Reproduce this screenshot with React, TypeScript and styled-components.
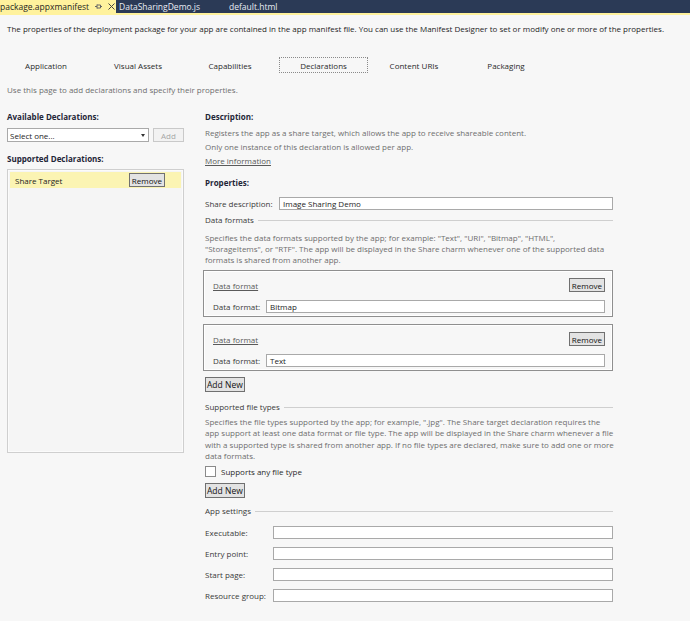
import React from "react";
import styled, { createGlobalStyle } from "styled-components";

const Global = createGlobalStyle`
  html, body { margin: 0; padding: 0; background: #f7f7f7; }
  body { font-family: "Open Sans", "Noto Sans", sans-serif; font-size: 8px; color: #1e1e1e; }
  * { box-sizing: border-box; }
`;

const Page = styled.div`
  width: 690px;
  height: 621px;
  overflow: hidden;
  background: #f7f7f7;
`;

const DocStrip = styled.div`
  display: flex;
  align-items: stretch;
  height: 15px;
  background: #2b3a56;
  border-bottom: 2px solid #fff29d;
`;

const DocTab = styled.div<{ $active?: boolean; $w: number }>`
  display: flex;
  align-items: center;
  gap: 6px;
  width: ${(p) => p.$w}px;
  padding-left: ${(p) => (p.$active ? 0 : 3)}px;
  background: ${(p) => (p.$active ? "#fff29d" : "transparent")};
  color: ${(p) => (p.$active ? "#1e1e1e" : "#e8ecf4")};
  font-size: 8.5px;
  line-height: 13px;
`;

const TabIcon = styled.span`
  display: inline-flex;
  align-items: center;
  color: #555;
`;

const Header = styled.div`
  margin: 8px 0 0 7px;
  line-height: 12px;
  white-space: nowrap;
`;

const TabRow = styled.div`
  display: grid;
  grid-template-columns: repeat(6, 92px);
  margin-top: 22px;
  height: 16px;
`;

const PageTab = styled.div<{ $active?: boolean }>`
  display: flex;
  align-items: center;
  justify-content: center;
  margin: 0 ${(p) => (p.$active ? "0 0 3px" : "0")};
  border: 1px dotted ${(p) => (p.$active ? "#8a8a8a" : "transparent")};
  color: #2a2a2a;
`;

const Hint = styled.div`
  margin: 11px 0 0 7px;
  line-height: 12px;
  color: #6e6e6e;
`;

const Columns = styled.div`
  display: grid;
  grid-template-columns: 177px 408px;
  column-gap: 21px;
  margin: 15px 0 0 7px;
`;

const Column = styled.div`
  display: flex;
  flex-direction: column;
`;

const Heading = styled.div<{ $mt?: number }>`
  font-weight: 700;
  line-height: 12px;
  color: #1f2638;
  margin-top: ${(p) => p.$mt ?? 0}px;
`;

const SelectRow = styled.div`
  display: flex;
  gap: 4px;
  margin-top: 5px;
  height: 14px;
`;

const Select = styled.div`
  flex: 1;
  display: flex;
  align-items: center;
  justify-content: space-between;
  padding: 0 3px 0 2px;
  background: #fff;
  border: 1px solid #a9a9a9;
  color: #1e1e1e;
`;

const Caret = styled.span`
  width: 0;
  height: 0;
  border-left: 2.5px solid transparent;
  border-right: 2.5px solid transparent;
  border-top: 3px solid #333;
`;

const Button = styled.button<{ $disabled?: boolean }>`
  font: inherit;
  font-size: 8px;
  line-height: 11px;
  padding: 0 2px;
  margin: 0;
  height: 14px;
  background: ${(p) => (p.$disabled ? "#f2f2f2" : "#e3e3e3")};
  border: 1px solid ${(p) => (p.$disabled ? "#c9c9c9" : "#707070")};
  color: ${(p) => (p.$disabled ? "#a6a6a6" : "#111")};
  border-radius: 0;
  cursor: default;
`;

const AddBtn = styled(Button)`
  width: 31px;
`;

const ListBox = styled.div`
  margin-top: 4px;
  height: 284px;
  border: 1px solid #cfcfcf;
  box-shadow: inset 0 0 0 1px #fbfbfb;
  padding: 2px 2px;
  background: #f5f5f5;
`;

const ListItem = styled.div`
  display: flex;
  align-items: center;
  justify-content: space-between;
  height: 16px;
  padding: 0 16px 0 5px;
  background: #fbf4b3;
  color: #222;
`;

const Para = styled.div<{ $lh?: number; $mt?: number; $color?: string }>`
  line-height: ${(p) => p.$lh ?? 14}px;
  margin-top: ${(p) => p.$mt ?? 0}px;
  color: ${(p) => p.$color ?? "#6e6e6e"};
  white-space: nowrap;
`;

const Link = styled.span`
  text-decoration: underline;
  color: #5a5a5a;
`;

const FieldRow = styled.div<{ $label: number; $mt?: number }>`
  display: grid;
  grid-template-columns: ${(p) => p.$label}px 1fr;
  align-items: center;
  margin-top: ${(p) => p.$mt ?? 0}px;
  color: #3a3a3a;
`;

const Input = styled.div`
  height: 13px;
  padding: 0 3px;
  line-height: 11px;
  background: #fff;
  border: 1px solid #a9a9a9;
  color: #1e1e1e;
`;

const SectionTitle = styled.div<{ $mt?: number }>`
  display: flex;
  align-items: center;
  gap: 4px;
  line-height: 12px;
  margin-top: ${(p) => p.$mt ?? 0}px;
  color: #3a3a3a;
  &::after {
    content: "";
    flex: 1;
    height: 1px;
    background: #cfcfcf;
  }
`;

const FormatBox = styled.div<{ $mt: number }>`
  margin: ${(p) => p.$mt}px 0 0 -2px;
  height: 47px;
  border: 1px solid #8f8f8f;
  box-shadow: inset 0 0 0 1px #fff;
  padding: 7px 7px 0 9px;
  display: flex;
  flex-direction: column;
`;

const FormatHead = styled.div`
  display: flex;
  align-items: center;
  justify-content: space-between;
  height: 14px;
`;

const AddNew = styled(Button)<{ $mt: number }>`
  align-self: flex-start;
  margin-top: ${(p) => p.$mt}px;
  height: 15px;
  padding: 0 1px;
  font-size: 8.5px;
`;

const CheckRow = styled.div`
  display: flex;
  align-items: center;
  gap: 5px;
  margin-top: 4px;
  height: 12px;
  color: #2a2a2a;
`;

const Box = styled.span`
  width: 11px;
  height: 11px;
  background: #fff;
  border: 1px solid #8a8a8a;
`;

const formatsText =
  'Specifies the data formats supported by the app; for example: "Text", "URI", "Bitmap", "HTML",';
const formatsText2 =
  '"StorageItems", or "RTF". The app will be displayed in the Share charm whenever one of the supported data';

export default function App() {
  return (
    <Page>
      <Global />
      <DocStrip>
        <DocTab $active $w={116}>
          <span>package.appxmanifest</span>
          <TabIcon>
            <svg width="7" height="7" viewBox="0 0 7 7">
              <path d="M0 3.5h2M2 1.5v4M2 2h3.5v3H2M5.5 3.5H7" stroke="#666" strokeWidth="1" fill="none" />
            </svg>
          </TabIcon>
          <TabIcon>
            <svg width="7" height="7" viewBox="0 0 7 7">
              <path d="M0.5 0.5l6 6M6.5 0.5l-6 6" stroke="#444" strokeWidth="1" />
            </svg>
          </TabIcon>
        </DocTab>
        <DocTab $w={110}>DataSharingDemo.js</DocTab>
        <DocTab $w={80}>default.html</DocTab>
      </DocStrip>

      <Header>
        The properties of the deployment package for your app are contained in the app manifest file. You can use
        the Manifest Designer to set or modify one or more of the properties.
      </Header>

      <TabRow>
        <PageTab>Application</PageTab>
        <PageTab>Visual Assets</PageTab>
        <PageTab>Capabilities</PageTab>
        <PageTab $active>Declarations</PageTab>
        <PageTab>Content URIs</PageTab>
        <PageTab>Packaging</PageTab>
      </TabRow>

      <Hint>Use this page to add declarations and specify their properties.</Hint>

      <Columns>
        <Column>
          <Heading>Available Declarations:</Heading>
          <SelectRow>
            <Select>
              <span>Select one...</span>
              <Caret />
            </Select>
            <AddBtn $disabled>Add</AddBtn>
          </SelectRow>
          <Heading $mt={11}>Supported Declarations:</Heading>
          <ListBox>
            <ListItem>
              <span>Share Target</span>
              <Button>Remove</Button>
            </ListItem>
          </ListBox>
        </Column>

        <Column>
          <Heading>Description:</Heading>
          <Para $mt={3}>Registers the app as a share target, which allows the app to receive shareable content.</Para>
          <Para>Only one instance of this declaration is allowed per app.</Para>
          <Para>
            <Link>More information</Link>
          </Para>
          <Heading $mt={9}>Properties:</Heading>
          <FieldRow $label={74} $mt={8}>
            <span>Share description:</span>
            <Input>Image Sharing Demo</Input>
          </FieldRow>
          <SectionTitle $mt={4}>Data formats</SectionTitle>
          <Para $lh={11} $mt={6}>
            {formatsText}
            <br />
            {formatsText2}
            <br />
            formats is shared from another app.
          </Para>
          {["Bitmap", "Text"].map((f, i) => (
            <FormatBox key={f} $mt={i === 0 ? 5 : 7}>
              <FormatHead>
                <Link>Data format</Link>
                <Button>Remove</Button>
              </FormatHead>
              <FieldRow $label={53} $mt={8}>
                <span>Data format:</span>
                <Input>{f}</Input>
              </FieldRow>
            </FormatBox>
          ))}
          <AddNew $mt={6}>Add New</AddNew>
          <SectionTitle $mt={9}>Supported file types</SectionTitle>
          <Para $lh={11.3} $mt={3}>
            Specifies the file types supported by the app; for example, ".jpg". The Share target declaration requires the
            <br />
            app support at least one data format or file type. The app will be displayed in the Share charm whenever a file
            <br />
            with a supported type is shared from another app. If no file types are declared, make sure to add one or more
            <br />
            data formats.
          </Para>
          <CheckRow>
            <Box />
            <span>Supports any file type</span>
          </CheckRow>
          <AddNew $mt={6}>Add New</AddNew>
          <SectionTitle $mt={7}>App settings</SectionTitle>
          <FieldRow $label={68} $mt={9}>
            <span>Executable:</span>
            <Input />
          </FieldRow>
          <FieldRow $label={68} $mt={8}>
            <span>Entry point:</span>
            <Input />
          </FieldRow>
          <FieldRow $label={68} $mt={8}>
            <span>Start page:</span>
            <Input />
          </FieldRow>
          <FieldRow $label={68} $mt={8}>
            <span>Resource group:</span>
            <Input />
          </FieldRow>
        </Column>
      </Columns>
    </Page>
  );
}
